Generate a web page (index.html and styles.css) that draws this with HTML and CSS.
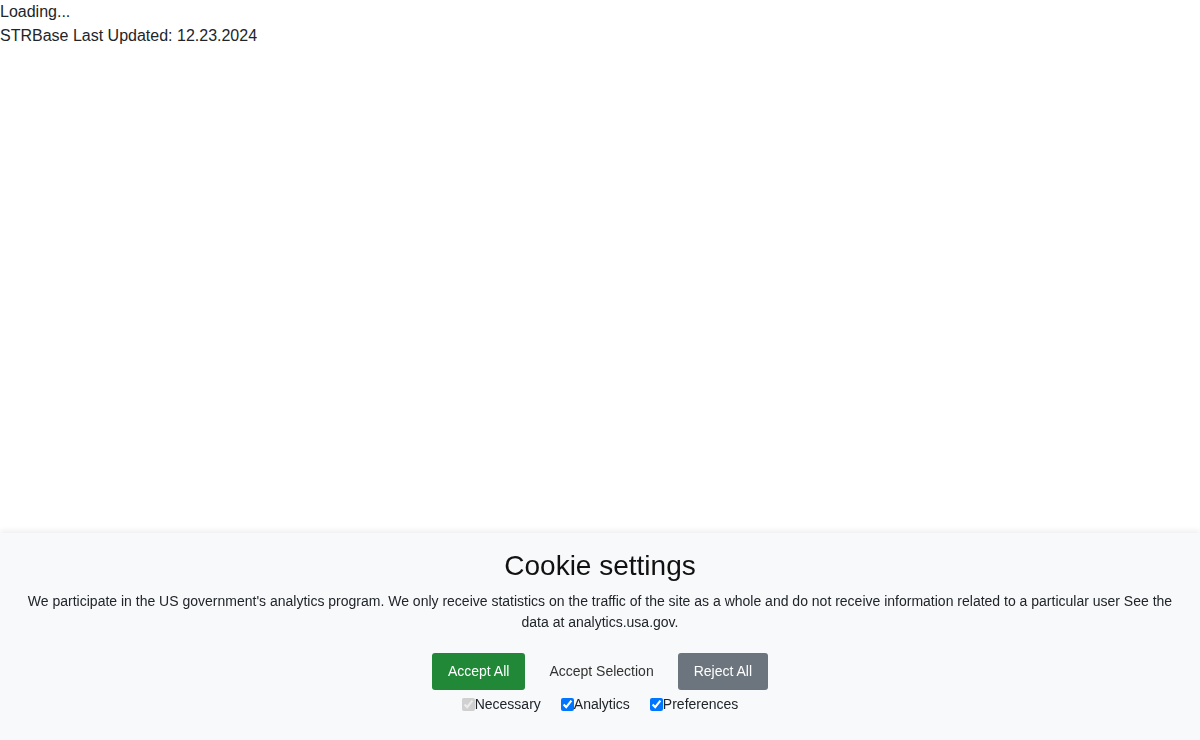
FILE: index.html
```html
<!DOCTYPE html>
<html>
  <head>
    <meta charset="utf-8" />
    <meta name="viewport" content="width=device-width, initial-scale=1.0" />
    <title>STRBase</title>
    <link rel="stylesheet" href="styles.css">
  </head>
  <body>
    <div id="root">Loading...</div>
    <div class="updated">STRBase Last Updated: 12.23.2024</div>

    <div class="cookie-bar">
      <h2 class="cookie-title">Cookie settings</h2>
      <p class="cookie-text">We participate in the US government's analytics program. We only receive statistics on the traffic of the site as a whole and do not receive information related to a particular user See the data at analytics.usa.gov.</p>
      <div class="cookie-buttons">
        <button class="btn btn-accept">Accept All</button>
        <button class="btn btn-select">Accept Selection</button>
        <button class="btn btn-reject">Reject All</button>
      </div>
      <div class="cookie-options">
        <label><input type="checkbox" checked disabled>Necessary</label>
        <label><input type="checkbox" checked>Analytics</label>
        <label><input type="checkbox" checked>Preferences</label>
      </div>
    </div>
  </body>
</html>
```

FILE: styles.css
```css
* { box-sizing: border-box; }
body { margin: 0; background-color: #ffffff; font-family: "Liberation Sans", Arial, sans-serif; font-size: 16px; line-height: 1.5; color: #212529; }

.cookie-bar { position: fixed; left: 0; right: 0; bottom: 0; background-color: #f8f9fa; box-shadow: 0 -2px 6px rgba(0, 0, 0, 0.08); padding: 16px 24px 25px 24px; text-align: center; }
.cookie-title { margin: 0 0 8px 0; font-size: 28px; font-weight: normal; line-height: 1.2; color: #111111; }
.cookie-text { margin: 0 0 20px 0; font-size: 14px; line-height: 21px; color: #212529; }

.cookie-buttons { display: flex; justify-content: center; gap: 8px; }
.btn { font-family: "Liberation Sans", Arial, sans-serif; font-size: 14px; line-height: 21px; padding: 8px 16px; border: 0; border-radius: 3px; cursor: pointer; }
.btn-accept { background-color: #218838; color: #ffffff; }
.btn-select { background-color: transparent; color: #333333; }
.btn-reject { background-color: #6c757d; color: #ffffff; }

.cookie-options { display: flex; justify-content: center; gap: 20px; margin-top: 4px; font-size: 14px; line-height: 21px; color: #212529; }
.cookie-options label { display: inline-flex; align-items: center; }
.cookie-options input { width: 13px; height: 13px; margin: 0; }
```
